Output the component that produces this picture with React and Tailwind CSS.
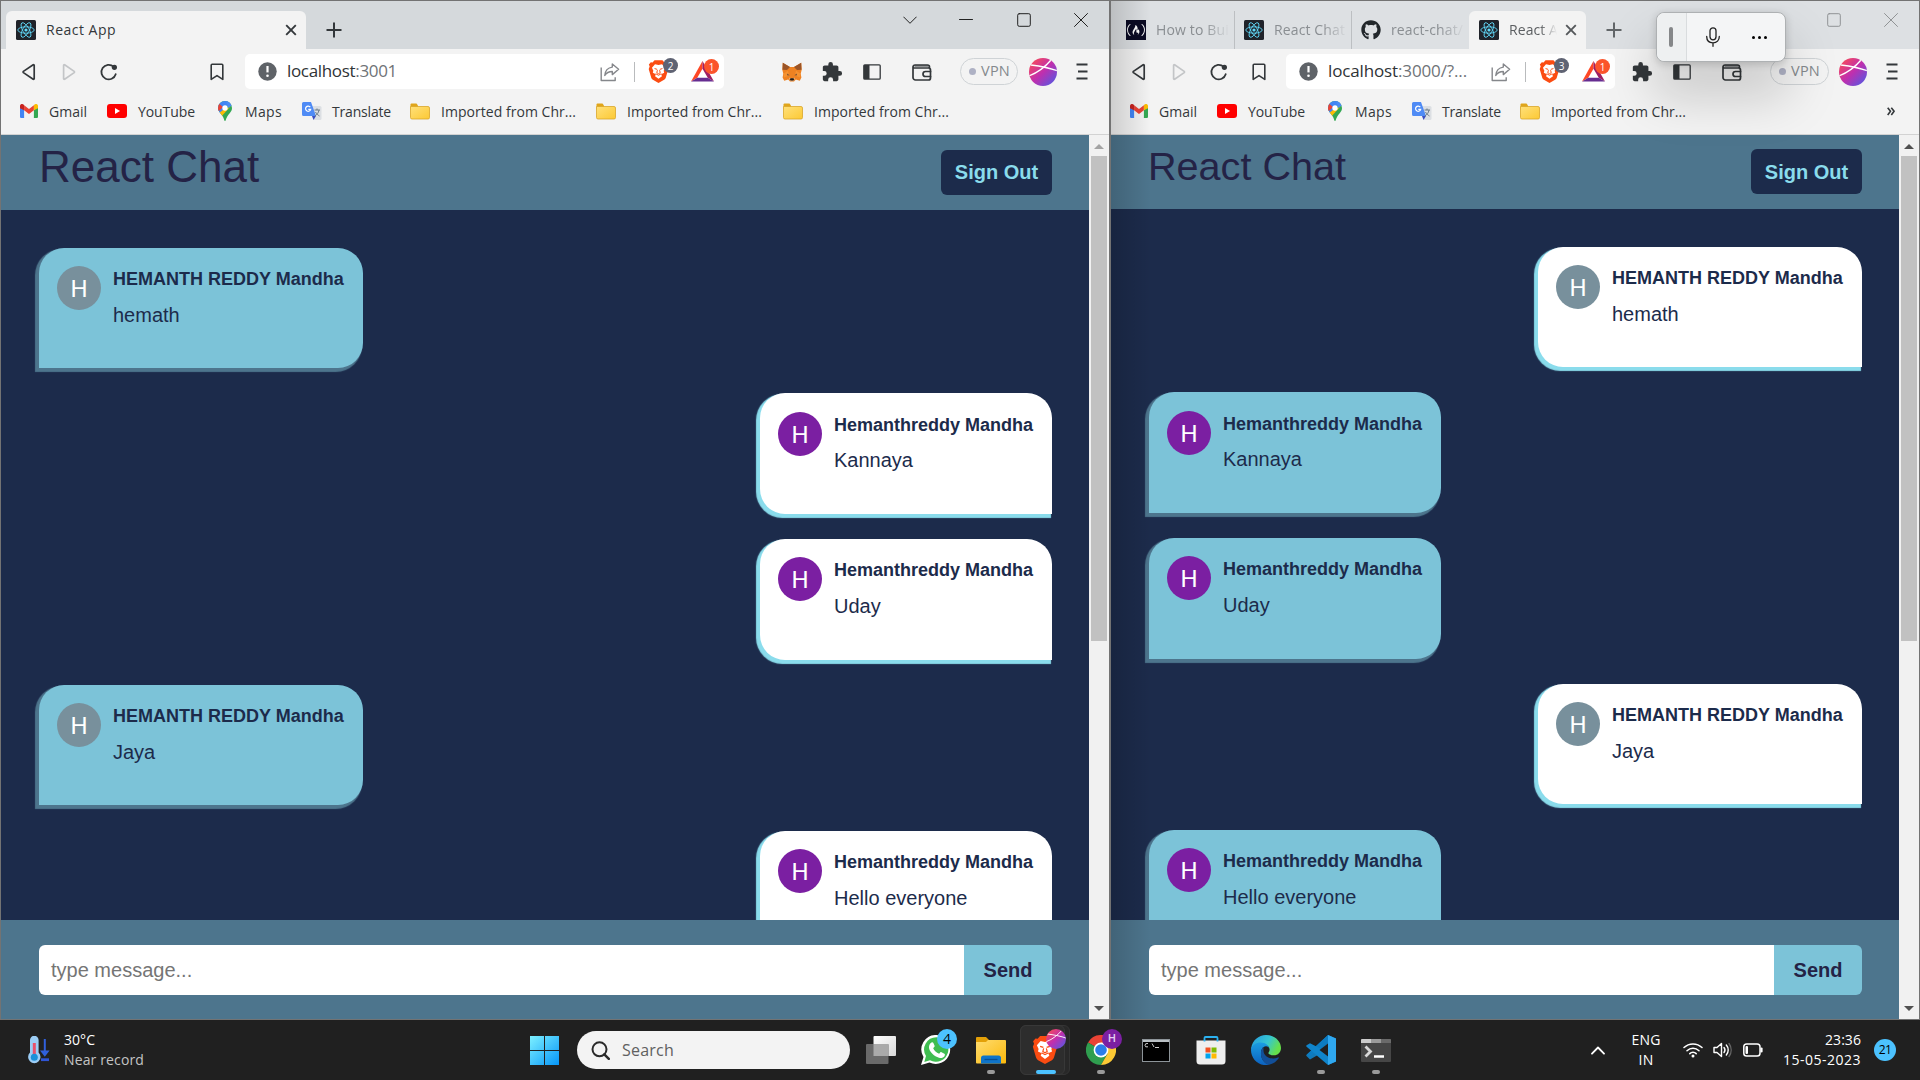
import React, { useLayoutEffect, useRef, useState } from "react";
import { FaGithub, FaFreeCodeCamp } from "react-icons/fa";

/* Text whose tracking is adjusted so that it fills the given width. */
function Fit({ w, className = "", children }) {
  const ref = useRef(null);
  const [spacing, setSpacing] = useState(0);
  useLayoutEffect(() => {
    const el = ref.current;
    setSpacing((w - el.getBoundingClientRect().width) / el.textContent.length);
  }, [w]);
  return (
    <span ref={ref} className={`whitespace-pre inline-block ${className}`} style={{ letterSpacing: spacing }}>
      {children}
    </span>
  );
}

const stroke = { fill: "none", stroke: "currentColor", strokeLinecap: "round", strokeLinejoin: "round" };

const ReactIcon = () => (
  <svg viewBox="0 0 20 20" className="size-5 shrink-0">
    <rect width="20" height="20" rx="1.5" fill="#20232a" />
    <g fill="none" stroke="#61dafb" strokeWidth=".85">
      <ellipse cx="10" cy="10" rx="8.2" ry="3.2" />
      <ellipse cx="10" cy="10" rx="8.2" ry="3.2" transform="rotate(60 10 10)" />
      <ellipse cx="10" cy="10" rx="8.2" ry="3.2" transform="rotate(120 10 10)" />
    </g>
    <circle cx="10" cy="10" r="1.6" fill="#61dafb" />
  </svg>
);
const XIcon = ({ className = "" }) => (
  <svg viewBox="0 0 12 12" className={`size-3 shrink-0 ${className}`} {...stroke} strokeWidth="1.9" strokeLinecap="butt">
    <path d="M1.2 1.2l9.6 9.6M10.8 1.2l-9.6 9.6" />
  </svg>
);
const PlusIcon = () => (
  <svg viewBox="0 0 16 16" className="size-4" {...stroke} strokeWidth="2" strokeLinecap="butt">
    <path d="M8 .5v15M.5 8h15" />
  </svg>
);
const BackIcon = () => (
  <svg viewBox="0 0 20 20" className="size-5 text-[#33373a]" {...stroke} strokeWidth="1.7">
    <path d="M15.2 3.2v13.6a.6.6 0 0 1-1 .4L4.4 10.6a.8.8 0 0 1 0-1.2l9.8-6.6a.6.6 0 0 1 1 .4z" />
  </svg>
);
const ForwardIcon = () => (
  <svg viewBox="0 0 20 20" className="size-5 text-[#c3c5c7]" {...stroke} strokeWidth="1.7">
    <path d="M4.6 3.2v13.6a.6.6 0 0 0 1 .4l9.6-6.6a.8.8 0 0 0 0-1.2L5.6 2.8a.6.6 0 0 0-1 .4z" />
  </svg>
);
const ReloadIcon = () => (
  <svg viewBox="0 0 20 20" className="size-5 text-[#33373a]" {...stroke} strokeWidth="1.8">
    <path d="M16.7 12.2A7.3 7.3 0 1 1 14.6 4.7" />
    <circle cx="15.400" cy="5.300" r="2.600" fill="currentColor" stroke="none" />
  </svg>
);
const BookmarkIcon = () => (
  <svg viewBox="0 0 20 20" className="size-5 text-[#33373a]" {...stroke} strokeWidth="1.6">
    <path d="M4.2 3.2q0-.9.9-.9h9.8q.9 0 .9.9v14.2L10 13.6 4.2 17.4z" />
  </svg>
);
const InfoIcon = () => (
  <svg viewBox="0 0 19 19" className="size-[19px] shrink-0">
    <circle cx="9.5" cy="9.5" r="9.2" fill="#5f6368" />
    <path d="M9.5 4v6.4" stroke="#fff" strokeWidth="2.2" />
    <circle cx="9.5" cy="13.7" r="1.3" fill="#fff" />
  </svg>
);
const ShareIcon = () => (
  <svg viewBox="0 0 20 20" className="size-5 text-[#85878b]" {...stroke} strokeWidth="1.4" strokeLinecap="butt">
    <path d="M1.2 5.5v13h14v-3.2" />
    <path d="M12.3 2l6.3 5.3-6.3 5.3V9.5c-3.600 0-5.800 1.200-7.500 4 .3-4.400 3-8 7.500-8.400z" />
  </svg>
);
const Brave = ({ className = "" }) => (
  <svg viewBox="0 0 24 26" className={`relative shrink-0 ${className}`}>
    <path d="M7.500 0h9l2.300 2.600 2-.3 2.200 2.700-.9 2.200 1.100 2.800-2.900 10q-.6 1.500-1.900 2.400L12 26l-6.400-3.600q-1.300-.9-1.900-2.400L.800 10l1.100-2.800L1 5l2.200-2.700 2 .3z" fill="#fb4c12" />
    <path d="M12 5.600l4-1 3.500 4-1.600 3.400.6 2.300-3.500 1.700 1 2.400-4 3-4-3 1-2.400-3.500-1.700.6-2.300-1.600-3.400 3.500-4z" fill="#fff" />
    <path d="M7.500 9.600l3 1M16.500 9.600l-3 1M10.800 11.500l-.8 2.800 2 1.200 2-1.200-.8-2.800M8.800 15.500L12 17.300l3.200-1.800" fill="none" stroke="#fb4c12" strokeWidth="1.100" />
  </svg>
);
const Bat = () => (
  <svg viewBox="0 0 24 22" className="w-[23px] h-[21px]">
    <path d="M12 0L0 21.500 6.500 17.500 12 8z" fill="#ff4724" />
    <path d="M12 0l12 21.500-6.500-4L12 8z" fill="#9e1f63" />
    <path d="M0 21.500h24l-6.500-4h-11z" fill="#662d91" />
  </svg>
);
const Fox = () => (
  <svg viewBox="0 0 20 20" className="size-5">
    <path d="M.8.8L8 5h4L19.200.8l.5 7-1 4 .7 3.800-1.600 3.200-4-1.300L12 19.500H8l-1.800-2-4 1.300-1.600-3.200.7-3.800-1-4z" fill="#ee8222" />
    <path d="M.8.8L8 5 5 8 .5 7.800zM19.200.8L12 5l3 3 4.500-.2z" fill="#9a5427" />
    <path d="M1.300 12L6 8.500l1 5-5 2zM18.700 12L14 8.500l-1 5 5 2z" fill="#f59231" />
    <path d="M5 11.500l2.600 1.800-2.200.3zM15 11.500l-2.600 1.800 2.200.3z" fill="#6b4a34" />
    <path d="M7 15.500l1.200 3h3.600l1.200-3-1.500 1h-3z" fill="#d8c3b0" />
    <path d="M8 17.200l.5-1h3l.5 1-.5 1.300h-3z" fill="#221c18" />
  </svg>
);
const Puzzle = () => (
  <svg viewBox="0 0 24 24" className="size-[22px] text-[#33373a]" fill="currentColor">
    <path d="M20.500 11H19V7c0-1.100-.9-2-2-2h-4V3.500a2.500 2.500 0 0 0-5 0V5H4c-1.100 0-2 .9-2 2v3.800h1.500a2.700 2.700 0 0 1 0 5.400H2V20c0 1.100.9 2 2 2h3.800v-1.500a2.700 2.700 0 0 1 5.400 0V22H17c1.100 0 2-.9 2-2v-4h1.500a2.500 2.500 0 0 0 0-5z" />
  </svg>
);
const Sidebar = () => (
  <svg viewBox="0 0 18 16" className="w-[18px] h-4">
    <rect x=".8" y=".8" width="16.400" height="14.400" rx="1" fill="none" stroke="#33373a" strokeWidth="1.300" />
    <rect x="1" y="1" width="5.500" height="14" fill="#33373a" />
  </svg>
);
const Wallet = () => (
  <svg viewBox="0 0 20 18" className="w-5 h-[18px] text-[#33373a]" {...stroke} strokeWidth="1.7">
    <path d="M17.500 5.500V4a2 2 0 0 0-2-2H3a2 2 0 0 0-2 2v10.500a2.500 2.500 0 0 0 2.500 2.500h13a2 2 0 0 0 2-2V7a2 2 0 0 0-2-2H2" />
    <path d="M18.500 8.500h-5a2.500 2.500 0 0 0 0 5h5" />
    <path d="M3 3h13" strokeWidth="1.200" />
  </svg>
);
const Profile = ({ className = "size-7", id }) => (
  <svg viewBox="0 0 28 28" className={`shrink-0 ${className}`}>
    <defs>
      <linearGradient id={`p${id}`} x1="0" y1="0" x2="1" y2="1">
        <stop offset=".1" stopColor="#f5495c" />
        <stop offset=".5" stopColor="#c02fae" />
        <stop offset="1" stopColor="#465eea" />
      </linearGradient>
      <clipPath id={`c${id}`}><circle cx="14" cy="14" r="14" /></clipPath>
    </defs>
    <circle cx="14" cy="14" r="14" fill={`url(#p${id})`} />
    <path d="M0 18C10 14 17 8 22 2M2 7c8 1 19 3 27 6" fill="none" stroke="#fff" strokeWidth="1.300" clipPath={`url(#c${id})`} />
  </svg>
);
const Menu = () => (
  <svg viewBox="0 0 12 17" className="w-3 h-[17px]" stroke="#33373a" strokeWidth="1.800">
    <path d="M.5 1.500h11M2 8.500h9.500M.5 15.500h11" />
  </svg>
);
const Gmail = () => (
  <svg viewBox="0 0 18 14" className="w-[18px] h-3.5 shrink-0">
    <path d="M0 2.500v10.200c0 .7.600 1.300 1.300 1.300h2.800V6z" fill="#4285f4" />
    <path d="M18 2.500v10.200c0 .7-.6 1.300-1.300 1.300h-2.800V6z" fill="#34a853" />
    <path d="M4.100 6.300V1.200L9 5l4.900-3.800v5.100L9 10z" fill="#ea4335" />
    <path d="M0 4.200V2C0 .2 2-.7 3.400.5l.7.600v5.200z" fill="#c5221f" />
    <path d="M18 4.200V2c0-1.800-2-2.700-3.400-1.500l-.7.600v5.200z" fill="#fbbc04" />
  </svg>
);
const YouTube = () => (
  <svg viewBox="0 0 20 14" className="w-5 h-3.5 shrink-0">
    <rect width="20" height="14" rx="3" fill="#f00" />
    <path d="M8 4v6l5-3z" fill="#fff" />
  </svg>
);
const Maps = () => (
  <svg viewBox="0 0 14 20" className="w-3.5 h-5 shrink-0">
    <clipPath id="pin"><path d="M7 0a7 7 0 0 1 7 7c0 4-3.500 5.500-5.700 10.500Q7.700 20 7 20t-1.300-2.500C4.500 13.500 0 11 0 7a7 7 0 0 1 7-7z" /></clipPath>
    <g clipPath="url(#pin)">
      <path d="M0 0h14v20H0z" fill="#34a853" />
      <path d="M14 0L2 13-3 8V0z" fill="#4285f4" />
      <path d="M-1 1l6 5-5 5z" fill="#ea4335" />
      <path d="M5 9L0 13l3 3 9-10z" fill="#fbbc04" />
      <path d="M8-1h7v5l-5 3z" fill="#4a8cf5" />
    </g>
    <circle cx="7" cy="7" r="2.700" fill="#fff" />
  </svg>
);
const Translate = () => (
  <svg viewBox="0 0 20 20" className="size-5 shrink-0">
    <path d="M8 5h10a1.500 1.500 0 0 1 1.500 1.500v11A1.500 1.500 0 0 1 18 19h-6z" fill="#dcdfe3" />
    <path d="M10 15h4l-2.500 4z" fill="#3a4fc0" />
    <path d="M1.500 1H9l5 14H1.500A1.500 1.500 0 0 1 0 13.500v-11A1.500 1.500 0 0 1 1.500 1z" fill="#4f8bf5" />
    <path d="M8.300 6.200A2.600 2.600 0 1 0 8.700 8.300H6.300" fill="none" stroke="#fff" strokeWidth="1.200" />
    <path d="M12.500 9h5.500M15 7.500V9M17 9c-.5 3-2 4.500-4 6M13.500 11c1 2 2.500 3 4 4" fill="none" stroke="#6b7b87" strokeWidth="1" />
  </svg>
);
const Folder = () => (
  <svg viewBox="0 0 20 17" className="w-5 h-[17px] shrink-0">
    <defs><linearGradient id="fold" x1="0" y1="0" x2="1" y2="1"><stop offset="0" stopColor="#ffe07a" /><stop offset="1" stopColor="#fcc934" /></linearGradient></defs>
    <path d="M.5 1.500Q.5.500 1.500.500h5L8 2.500v4H.5z" fill="#e0a51b" />
    <path d="M.5 3.500h17.500q1.500 0 1.500 1.500v9.500q0 1.500-1.500 1.500H2Q.5 16 .5 14.500z" fill="url(#fold)" stroke="#d9a62a" strokeWidth=".8" />
  </svg>
);

const Slot = ({ className = "w-10", children }) => (
  <div className={`flex shrink-0 items-center justify-center ${className}`}>{children}</div>
);

const Badge = ({ className = "", children }) => (
  <span className={`absolute -top-[2px] flex size-[15px] items-center justify-center rounded-full text-[10px] leading-none text-white ${className}`}>{children}</span>
);

function Toolbar({ left }) {
  return (
    <div className="flex h-[45px] items-center pl-2">
      <Slot><BackIcon /></Slot>
      <Slot><ForwardIcon /></Slot>
      <Slot><ReloadIcon /></Slot>
      <Slot className={left ? "ml-[68px] w-10" : "w-10"}><BookmarkIcon /></Slot>
      <div className={`flex h-[35px] shrink-0 items-center rounded-[5px] bg-white pl-[13px] text-[17px] text-[#2f3336] ${left ? "ml-2 w-[479px]" : "ml-[7px] w-[329px]"}`}>
        <InfoIcon />
        {left ? (
          <Fit w={110} className="ml-[10px] pb-px">localhost<span className="text-[#6f7377]">:3001</span></Fit>
        ) : (
          <Fit w={139} className="ml-[10px] pb-px">localhost<span className="text-[#6f7377]">:3000/?...</span></Fit>
        )}
        <Slot className="ml-auto w-12"><ShareIcon /></Slot>
        <div className="mr-[2px] h-5 w-px shrink-0 bg-[#b9bbbd]" />
        <Slot className="relative w-[43px]">
          <Brave className="h-[23px] w-[21px]" />
          <Badge className="left-[26px] bg-[#5f6373]">{left ? "2" : "3"}</Badge>
        </Slot>
        <Slot className="relative w-11">
          <Bat />
          <Badge className="left-6 bg-[#fb542b]">1</Badge>
        </Slot>
      </div>
      {left && <Slot className="ml-12 w-10"><Fox /></Slot>}
      <Slot className={left ? "w-10" : "ml-[7px] w-10"}><Puzzle /></Slot>
      <Slot><Sidebar /></Slot>
      <Slot className="ml-[10px] w-10"><Wallet /></Slot>
      <div className={`ml-[18px] flex h-[27px] shrink-0 items-center rounded-full border border-[#cfd3d6] pl-2 text-[14.500px] text-[#84898d] ${left ? "w-[58px]" : "w-[59px]"}`}>
        <span className="mr-[5px] size-[7px] rounded-full bg-[#aeb1c4]" />
        <Fit w={29} className="pb-px">VPN</Fit>
      </div>
      <div className={left ? "ml-[11px]" : "ml-[10px]"}><Profile id={left ? "a" : "b"} /></div>
      <Slot className="ml-[5px] w-10"><Menu /></Slot>
    </div>
  );
}

function Bookmarks({ left }) {
  const folder = (gap) => (
    <div className={`flex items-center ${gap}`}><Folder /><Fit w={135} className="ml-[11px]">Imported from Chr...</Fit></div>
  );
  return (
    <div className="flex h-[34px] items-center pl-[19px] text-[14px] text-[#34383b]">
      <Gmail /><Fit w={38} className="ml-[11px]">Gmail</Fit>
      <div className="ml-5 flex items-center"><YouTube /><Fit w={57} className="ml-[11px]">YouTube</Fit></div>
      <div className="ml-[23px] flex items-center"><Maps /><Fit w={37} className="ml-[13px]">Maps</Fit></div>
      <div className="ml-5 flex items-center"><Translate /><Fit w={59} className="ml-[10px]">Translate</Fit></div>
      {folder("ml-[19px]")}
      {left && folder("ml-5")}
      {left && folder("ml-[21px]")}
      {!left && (
        <svg viewBox="0 0 8 9" className="mr-[24px] ml-auto h-[9px] w-2" {...stroke} strokeLinecap="butt" strokeWidth="1.600">
          <path d="M.7.7l2.800 3.600L.7 8M4.300.7l2.800 3.600L4.300 8" />
        </svg>
      )}
    </div>
  );
}

function Bubble({ mine, grey, name, text }) {
  return (
    <div
      className={`mb-[25.25px] flex h-[120.5px] shrink-0 pt-[18.400px] pr-[19px] pl-[18px] text-[#1c2b4b] ${
        mine
          ? "self-end rounded-[25px_25px_0_25px] bg-white shadow-[-2.5px_2.5px_1px_1.250px_#8adcec]"
          : "self-start rounded-[25px_25px_25px_0] bg-[#7cc3d8] shadow-[-2.5px_2.5px_1px_1.250px_#4d758d]"
      }`}
    >
      <div className={`flex size-11 items-center justify-center rounded-full font-[Roboto] text-2xl text-white ${grey ? "bg-[#78909c]" : "bg-[#7b1fa2]"}`}>
        <span className="pt-[2px]">H</span>
      </div>
      <div className="ml-[12px]">
        <div className={`mt-[1px] h-6 text-[18px] leading-6 font-bold whitespace-nowrap ${grey ? "w-[231px]" : "w-[199px]"}`}>{name}</div>
        <div className="mt-[11.600px] text-[20px] leading-[25px]">{text}</div>
      </div>
    </div>
  );
}

const messages = [
  ["HEMANTH REDDY Mandha", "hemath"],
  ["Hemanthreddy Mandha", "Kannaya"],
  ["Hemanthreddy Mandha", "Uday"],
  ["HEMANTH REDDY Mandha", "Jaya"],
  ["Hemanthreddy Mandha", "Hello everyone"],
];

function Chat({ left }) {
  return (
    <div className="flex h-[884px] font-['Liberation_Sans',Arial,sans-serif]">
      <div className="flex min-w-0 flex-1 flex-col bg-[#1c2b4b]">
        <div className={`flex shrink-0 justify-between bg-[#4d758d] pr-[37px] pl-[38px] ${left ? "h-[75px]" : "h-[74px]"}`}>
          <div className={`text-[#242346] ${left ? "mt-[7px] text-[44px] leading-[50px]" : "mt-[8px] -ml-px text-[39.600px] leading-[46px]"}`}>React Chat</div>
          <div className={`flex h-[45px] w-[111px] items-center justify-center rounded-md bg-[#1c2b4b] text-[20px] font-bold text-[#8adcec] ${left ? "mt-[15px] pb-px" : "mt-[14px]"}`}>Sign Out</div>
        </div>
        <div className="flex min-h-0 flex-1 flex-col overflow-hidden pt-[37.600px] pr-[37px] pl-[38px]">
          {messages.map(([name, text]) => {
            const grey = name.startsWith("HEM");
            return <Bubble key={text} name={name} text={text} grey={grey} mine={grey !== left} />;
          })}
        </div>
        <div className="flex h-[99px] shrink-0 bg-[#4d758d] pt-[25px] pr-[37px] pl-[38px] text-[20px]">
          <div className="flex h-[50px] flex-1 items-center rounded-l-md bg-white pl-[12px] text-[#757575]">type message...</div>
          <div className="flex h-[50px] w-[88px] items-center justify-center rounded-r-md bg-[#7cc3d8] font-bold text-[#242346]">Send</div>
        </div>
      </div>
      <div className="flex w-5 flex-col items-center bg-[#f1f1f1]">
        <svg viewBox="0 0 20 21" className="h-[21px] w-5"><path d="M5 14h10l-5-5z" fill={left ? "#a3a3a3" : "#505050"} /></svg>
        <div className="h-[485px] w-4 bg-[#c1c1c1]" />
        <svg viewBox="0 0 20 21" className="mt-auto h-[21px] w-5"><path d="M5 8h10l-5 5z" fill="#505050" /></svg>
      </div>
    </div>
  );
}

const fade = "overflow-hidden [mask-image:linear-gradient(to_right,#000_65%,transparent)]";

function LeftTabs() {
  return (
    <div className="flex h-12 items-end bg-[#d5d9dc] pl-[5px]">
      <div className="flex h-[38px] w-[300px] items-center rounded-t-md bg-[#f3f3f3] pr-[9px] pl-[10px] text-[14px] text-[#34383b]">
        <ReactIcon /><Fit w={70} className="ml-[10px] pb-[2px]">React App</Fit>
        <XIcon className="ml-auto" />
      </div>
      <div className="ml-[20px] mb-[11px] text-[#33373a]"><PlusIcon /></div>
      <div className="mb-[22px] ml-auto mr-[21px] flex items-center text-[#222]">
        <svg viewBox="0 0 14 14" className="size-[14px]" {...stroke}><path d="M.7 4l6.300 6.300L13.300 4" /></svg>
        <svg viewBox="0 0 14 14" className="ml-[42px] size-[14px]" {...stroke}><path d="M.5 6.500h13" /></svg>
        <svg viewBox="0 0 14 14" className="ml-[44px] size-[14px]" {...stroke}><rect x=".7" y=".7" width="12.600" height="12.600" rx="1.500" /></svg>
        <svg viewBox="0 0 14 14" className="ml-[43px] size-[14px]" {...stroke}><path d="M.5.500l13 13M13.500.500l-13 13" /></svg>
      </div>
    </div>
  );
}

function RightTabs() {
  return (
    <div className="flex h-12 items-end bg-[#dde0e3] pl-[15px] text-[14px] text-[#8a8e92]">
      <div className="flex h-[38px] w-[109px] items-center border-r border-[#bcbfc2]">
        <span className="flex size-5 shrink-0 items-center justify-center bg-[#0a0a23]"><FaFreeCodeCamp className="size-[18px] text-white" /></span>
        <div className={`ml-[10px] w-[74px] pb-[2px] ${fade}`}><Fit w={73}>How to Bui</Fit></div>
      </div>
      <div className="flex h-[38px] w-[117px] items-center border-r border-[#bcbfc2] pl-[9px]">
        <ReactIcon />
        <div className={`ml-[10px] w-[74px] pb-[2px] ${fade}`}><Fit w={71}>React Chat</Fit></div>
      </div>
      <div className="flex h-[38px] w-[117px] items-center pl-[9px]">
        <FaGithub className="size-5 shrink-0 text-[#22272b]" />
        <div className={`ml-[10px] w-[74px] pb-[2px] ${fade}`}><Fit w={72}>react-chat/</Fit></div>
      </div>
      <div className="flex h-[38px] w-[117px] items-center rounded-t-md bg-[#f3f3f3] pr-[9px] pl-[10px] text-[#5b5e61]">
        <ReactIcon />
        <div className={`ml-[10px] w-[48px] pb-[2px] ${fade}`}><Fit w={49}>React A</Fit></div>
        <XIcon className="ml-auto text-[#55585b]" />
      </div>
      <div className="mb-[11px] ml-[20px] text-[#626669]"><PlusIcon /></div>
      <div className="mr-[21px] mb-[22px] ml-auto flex text-[#909395]">
        <svg viewBox="0 0 14 14" className="size-[14px]" {...stroke}><rect x=".7" y=".7" width="12.600" height="12.600" rx="1.500" /></svg>
        <svg viewBox="0 0 14 14" className="ml-[43px] size-[14px]" {...stroke}><path d="M.5.500l13 13M13.500.500l-13 13" /></svg>
      </div>
    </div>
  );
}

function Window({ left }) {
  return (
    <div className={`relative flex h-[1020px] flex-col overflow-hidden border-t border-b border-[#737373] bg-[#f3f3f3] ${left ? "w-[1111px] border-r-2 border-l" : "w-[809px] border-r"}`}>
      {left ? <LeftTabs /> : <RightTabs />}
      <Toolbar left={left} />
      <div className="flex h-[41px] flex-col border-b border-[#d2d2d2]"><Bookmarks left={left} /></div>
      <Chat left={left} />
      {!left && <div className="pointer-events-none absolute inset-y-0 left-0 w-10 bg-linear-to-r from-black/15 to-transparent" />}
    </div>
  );
}

const VoiceBar = () => (
  <div className="absolute top-3 left-[1656px] flex h-[50px] w-[130px] overflow-visible rounded-lg border border-[#aeb1b3] bg-[#f4f5f6] shadow-[0_32px_50px_4px_rgba(0,0,0,0.17),0_2px_8px_rgba(0,0,0,0.18)]">
    <div className="flex w-[30px] items-center justify-center rounded-l-lg border-r border-[#d9dcde] bg-[#eef0f1]"><span className="-ml-[2px] h-5 w-1 rounded-full bg-[#858789]" /></div>
    <div className="flex w-[52px] items-center justify-center text-[#222]">
      <svg viewBox="0 0 14 20" className="h-5 w-3.5" {...stroke} strokeWidth="1.300"><rect x="4" y=".8" width="6" height="12" rx="3" /><path d="M.7 9.500c0 4 2.500 6.300 6.300 6.300s6.300-2.300 6.300-6.300M7 16v3.300" /></svg>
    </div>
    <div className="flex w-10 items-center justify-center gap-[3px]">
      <i className="size-[3px] rounded-full bg-black" /><i className="size-[3px] rounded-full bg-black" /><i className="size-[3px] rounded-full bg-black" />
    </div>
  </div>
);

const TaskItem = ({ dot, children }) => (
  <div className="relative flex h-[60px] w-[55px] shrink-0 items-center justify-center">
    {children}
    {dot && <span className="absolute bottom-[6px] h-[4px] w-2 rounded-full bg-[#9a9a9a]" />}
  </div>
);

function Taskbar() {
  return (
    <div className="flex h-[60px] items-center bg-[#202020] text-[14px] text-white">
      <svg viewBox="0 0 24 28" className="ml-7 h-7 w-6 shrink-0">
        <path d="M2 4a4.300 4.300 0 0 1 8.600 0v12.500a6.200 6.200 0 1 1-8.600 0z" fill="#9ccdf5" />
        <path d="M6.300 7v12" stroke="#e9506a" strokeWidth="3" />
        <circle cx="6.300" cy="21.300" r="3.500" fill="#1b90d9" />
        <path d="M16.800 3v14M14 15.500h5.600l-2.800 3.700z" stroke="#3060dc" strokeWidth="2" fill="#3060dc" />
        <path d="M13 23.700h8" stroke="#2f55d6" strokeWidth="2.800" />
      </svg>
      <div className="ml-[12px] flex w-[82px] flex-col leading-5">
        <div><Fit w={31}>30°C</Fit></div><div><Fit w={80} className="text-[#c4c4c4]">Near record</Fit></div>
      </div>
      <svg viewBox="0 0 29 29" className="ml-[384px] size-[29px] shrink-0">
        <defs><linearGradient id="win" x1="0" y1="0" x2="29" y2="29" gradientUnits="userSpaceOnUse"><stop offset="0" stopColor="#7df0ff" /><stop offset="1" stopColor="#0696f8" /></linearGradient></defs>
        <path d="M0 0h14v14H0zM15 0h14v14H15zM0 15h14v14H0zM15 15h14v14H15z" fill="url(#win)" />
      </svg>
      <div className="ml-[18px] flex h-[38px] w-[273px] shrink-0 items-center rounded-full bg-[#f3f3f3] pl-[14px] text-[16px] text-[#606060]">
        <svg viewBox="0 0 19 19" className="size-[19px] text-[#2a2a2a]" {...stroke} strokeWidth="2"><circle cx="8.500" cy="8.300" r="7" /><path d="M13.300 13.300l4.500 4.500" strokeWidth="2.500" /></svg>
        <Fit w={52} className="ml-[12px]">Search</Fit>
      </div>
      <div className="ml-[3px] flex">
        <TaskItem>
          <svg viewBox="0 0 30 28" className="h-7 w-[30px]">
            <defs><linearGradient id="tv" x1="0" y1="0" x2="1" y2="1"><stop offset="0" stopColor="#fff" /><stop offset="1" stopColor="#d8d8d8" /></linearGradient></defs>
            <rect x="7.500" y="0" width="22.500" height="20" rx="1" fill="url(#tv)" />
            <rect x="0" y="8" width="22.500" height="20" rx="1" fill="#6a6a6a" />
            <path d="M7.500 8h15v12h-15z" fill="#aaa" />
          </svg>
        </TaskItem>
        <TaskItem>
          <svg viewBox="0 0 30 30" className="size-[30px]"><path d="M15.500 0A14.500 14.500 0 1 1 8.500 27.600L0 30l2.500-8A14.500 14.500 0 0 1 15.500 0z" fill="#fff" /><path d="M15.500 2.200a12.300 12.300 0 1 1-6.500 23l-5.700 1.700L5 21A12.300 12.300 0 0 1 15.500 2.200z" fill="#3fbd50" /><path d="M10.500 7.500c.8-.5 1.600-.2 1.900.5l1.200 2.800c.2.500-.1 1.100-1.400 2.400 1 2.300 3.200 4.500 5.900 5.600 1.500-1.700 1.700-1.900 2.400-1.600l2.900 1.500c.8.400.6 1.600 0 2.600-1 1.700-3.400 2.100-5.400 1.500-5-1.400-8.700-5.300-9.800-9-.7-2.500.4-5.300 2.300-6.300z" fill="#fff" /></svg>
          <span className="absolute top-[9px] left-[29px] flex size-5 items-center justify-center rounded-full bg-[#4cc2ff] text-[14px] leading-none text-black">4</span>
        </TaskItem>
        <TaskItem dot>
          <svg viewBox="0 0 30 27" className="h-[27px] w-[30px]">
            <defs><linearGradient id="fe" x1="0" y1="0" x2="1" y2="1"><stop offset="0" stopColor="#ffdc70" /><stop offset="1" stopColor="#fbb90b" /></linearGradient></defs>
            <path d="M0 1q0-1 1-1h9l3 3v6H0z" fill="#e3a008" />
            <path d="M0 5h10l2-2h17q1 0 1 1v21.500q0 1-1 1H1q-1 0-1-1z" fill="url(#fe)" />
            <path d="M5 26.500V21q0-2.500 2.500-2.500h15Q25 18.500 25 21v5.500z" fill="#0f74c9" />
            <path d="M8.500 22.500h13" stroke="#084f94" strokeWidth="1.300" />
          </svg>
        </TaskItem>
        <TaskItem>
          <div className="absolute top-[5px] left-[2px] h-[50px] w-[50px] rounded-md border border-[#343434] bg-[#282828]" />
          <div className="absolute top-[5px] left-[2px] h-[50px] w-[45px] rounded-md border border-[#383838] bg-[#2d2d2d]" />
          <Brave className="-ml-[2px] h-[30px] w-[26px]" />
          <div className="absolute top-[9px] left-[28px]"><Profile className="size-5" id="c" /></div>
          <span className="absolute bottom-[6px] h-[4px] w-5 rounded-full bg-[#4cc2ff]" />
        </TaskItem>
        <TaskItem dot>
          <svg viewBox="0 0 30 30" className="size-[30px]">
            <path d="M15 15L2 7.500A15 15 0 0 1 28 7.500z" fill="#ea4335" />
            <path d="M15 0a15 15 0 0 1 13 7.500H15z" fill="#ea4335" />
            <path d="M15 15L2 7.500A15 15 0 0 0 15 30l6.500-11.200z" fill="#2f9e4f" />
            <path d="M15 7.500h13A15 15 0 0 1 15 30l6.500-11.200z" fill="#fcc934" />
            <circle cx="15" cy="15" r="7.400" fill="#fff" /><circle cx="15" cy="15" r="5.800" fill="#2b7de9" />
          </svg>
          <span className="absolute top-[9px] left-[29px] flex size-5 items-center justify-center rounded-full bg-[#7b1fa2] font-[Roboto] text-[11px] font-medium text-[#e3cdf0]">H</span>
        </TaskItem>
        <TaskItem>
          <svg viewBox="0 0 28 23" className="h-[23px] w-7"><rect x=".5" y=".5" width="27" height="22" fill="#000" stroke="#8d9499" /><path d="M1 1h26v2H1z" fill="#b9bfc3" /><path d="M6 4.500q-3-.5-3 1.800t3 1.500M8 5.500v.1M8 8v.1M10 4.500l2 3.500M13 8.500h4" fill="none" stroke="#ccc" /></svg>
        </TaskItem>
        <TaskItem>
          <svg viewBox="0 0 30 30" className="size-[30px]">
            <path d="M.5 5.500h29V26q0 3.500-3.500 3.500H4Q.5 29.500.5 26z" fill="#eee" />
            <path d="M9.500 12.500h5v5h-5z" fill="#f25022" /><path d="M15.500 12.500h5v5h-5z" fill="#7fba00" /><path d="M9.500 18.500h5v5h-5z" fill="#00a4ef" /><path d="M15.500 18.500h5v5h-5z" fill="#ffb900" />
            <path d="M8.500 6.500V3Q8.500 2 9.500 2h11q1 0 1 1V6.500" fill="none" stroke="#2bb1f0" strokeWidth="1.800" />
          </svg>
        </TaskItem>
        <TaskItem>
          <svg viewBox="0 0 30 30" className="size-[30px]">
            <defs>
              <linearGradient id="e1" x1="0" y1="0" x2="1" y2=".4"><stop offset=".2" stopColor="#2aa8dc" /><stop offset=".6" stopColor="#36c6d0" /><stop offset="1" stopColor="#65e04b" /></linearGradient>
              <linearGradient id="e2" x1="0" y1="0" x2="0" y2="1"><stop offset="0" stopColor="#1b9de2" /><stop offset="1" stopColor="#0c62c0" /></linearGradient>
            </defs>
            <path d="M.2 13C1.300 5.500 7.500 0 15 0c8.500 0 15 6 15 13 0 4.500-3.300 7.300-7 7.300-3.500 0-5.600-1-5.600-2.200 0-.9 1.200-1.300 1.200-3.600 0-3-3-5-6.600-5C7 9.500 2 11 .2 15z" fill="url(#e1)" />
            <path d="M0 15C.5 10 5 7.500 9.500 7.500c5.500 0 9 3.500 9.100 7-.1-2-1.800-3.200-3.600-3.200-3.500 0-5 3.700-5 7.200 0 5.500 3 9.500 8 11.200C8 32 0 24 0 15z" fill="url(#e2)" />
            <path d="M12.500 12c-1.800 1.300-2.600 4-2.600 6.500 0 6 4.500 11 8.100 11.200 4-.8 7.500-3.200 9.700-6.500.4-.7-.2-1.100-.8-.8-6 2.800-14-.2-14.400-6.400-.1-1.800 0-3 0-4z" fill="#124f98" />
          </svg>
        </TaskItem>
        <TaskItem dot>
          <svg viewBox="0 0 30 30" className="size-[30px]">
            <path d="M22 0l8 3.500v6L4 24.500.5 21q-.6-.7.1-1.300z" fill="#1279b8" />
            <path d="M22 0v8L4 21.500l-3.400-1.800z" fill="#0c7cc2" />
            <path d="M4 8.200L.6 10.300q-.7.700 0 1.400L22 30l8-3.500v-5z" fill="#1085cc" />
            <path d="M22 0l8 3.500v23L22 30z" fill="#2fa8f0" />
            <path d="M22 8.500v13L13.500 15z" fill="#202020" />
          </svg>
        </TaskItem>
        <TaskItem dot>
          <svg viewBox="0 0 30 23" className="h-[23px] w-[30px]"><rect width="30" height="23" rx="1" fill="#464646" /><path d="M0 1q0-1 1-1h9v4H0z" fill="#ccc" /><path d="M10 0h10v4H10z" fill="#9a9a9a" /><path d="M20 0h9q1 0 1 1v3H20z" fill="#6a6a6a" /><path d="M4.500 7.500l5 5-5 5" fill="none" stroke="#d8d8d8" strokeWidth="2.800" /><path d="M13 17.500h10" stroke="#fff" strokeWidth="2.500" /></svg>
        </TaskItem>
      </div>
      <div className="mr-[24px] ml-auto flex items-center">
        <svg viewBox="0 0 14 9" className="h-[9px] w-3.5" {...stroke} strokeWidth="1.800"><path d="M1 7.700L7 1.500l6 6.200" /></svg>
        <div className="ml-[20px] flex w-[42px] flex-col items-center leading-5"><div><Fit w={29}>ENG</Fit></div><div><Fit w={15}>IN</Fit></div></div>
        <svg viewBox="0 0 20 16" className="ml-[16px] h-4 w-5" {...stroke} strokeWidth="1.500"><path d="M1 5.500a13 13 0 0 1 18 0M4 8.800a8.500 8.500 0 0 1 12 0M6.800 11.600a4.500 4.500 0 0 1 6.400 0" /><circle cx="10" cy="14" r="1.500" fill="currentColor" stroke="none" /></svg>
        <svg viewBox="0 0 20 16" className="ml-[10px] h-4 w-5" {...stroke} strokeWidth="1.400"><path d="M1 5.500h3L8.500 1.500v13L4 10.500H1z" /><path d="M11 5.500a4 4 0 0 1 0 5M13.300 3a7.500 7.500 0 0 1 0 10" /><path d="M16 1.500a11 11 0 0 1 0 13" stroke="#666" /></svg>
        <svg viewBox="0 0 20 14" className="ml-[10px] h-3.5 w-5" {...stroke} strokeWidth="1.500"><rect x=".8" y="1" width="16.200" height="12" rx="2.800" /><rect x="2.500" y="3" width="2.500" height="8" rx="1" fill="#fff" stroke="none" /><path d="M18.500 5.500v3" strokeWidth="2.200" /></svg>
        <div className="ml-[16px] flex w-[82px] flex-col items-end leading-5"><div><Fit w={36}>23:36</Fit></div><div><Fit w={78}>15-05-2023</Fit></div></div>
        <div className="ml-[13px] flex size-[22px] items-center justify-center rounded-full bg-[#4cc2ff] text-[12px] leading-none tracking-tighter text-black">21</div>
      </div>
    </div>
  );
}

export default function App() {
  return (
    <div className="relative h-[1080px] w-[1920px] overflow-hidden bg-[#202020] font-['Open_Sans','Noto_Sans',sans-serif]">
      <div className="flex"><Window left={true} /><Window left={false} /></div>
      <VoiceBar />
      <Taskbar />
    </div>
  );
}
